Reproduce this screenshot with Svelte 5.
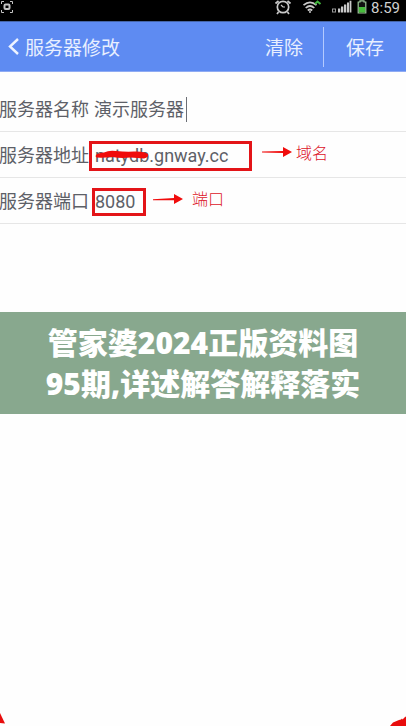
<script>
  let name = $state('演示服务器');
  let address = $state('natydb.gnway.cc');
  let port = $state('8080');
</script>

<div class="screen">
  <div class="status">
    <svg class="shot" width="14" height="14" viewBox="0 0 14 14" fill="none" stroke="#c4c4c4">
      <path d="M1.500 4V1.500H4M10 1.500h2.500V4M12.500 10v2.500H10M4 12.500H1.500V10" stroke-width="1" />
      <rect x="4.500" y="4.500" width="5" height="4.500" rx="1" stroke-width="2" />
    </svg>
    <svg width="18" height="16" viewBox="0 0 18 16" fill="none" stroke="#c9c9c9">
      <circle cx="9" cy="7" r="5.700" stroke-width="1.700" />
      <path d="M1.500 3.500 4.500 .8M13.500 .8l3 2.700M4.500 12 3 14M13.500 12l1.500 2" stroke-width="1.700" />
      <path d="M7 5 9 7h2" stroke-width="1.200" />
    </svg>
    <svg class="wifi" width="20" height="14" viewBox="0 0 20 14" fill="none" stroke="#c9c9c9" stroke-width="1.700">
      <path d="M1.500 5.200Q8 -.5 14.500 5.200M3.700 8Q8 4 12.300 8M5.800 10.500Q8 8.500 10.200 10.500" />
      <circle cx="8" cy="12" r="1" fill="#c9c9c9" stroke="none" />
      <path d="M13 4 15.500 1.500 18.500 4" stroke="#42b83c" stroke-width="2" />
    </svg>
    <svg class="signal" width="20" height="14" viewBox="0 0 20 14" fill="#c9c9c9">
      <rect x=".5" y="9" width="3" height="3" fill="none" stroke="#999" />
      <path d="M6 8.500h2.300v4H6zM9 6.500h2.300v6H9zM12 4.500h2.300v8H12zM15 2.500h2v10h-2zM17.600 .8h1.800v11.700h-1.800z" />
    </svg>
    <svg width="10" height="14" viewBox="0 0 10 14">
      <path d="M3 2V.8h4V2h1.800v11H1.200V2z" fill="#111" stroke="#9fc99b" stroke-width="1.200" />
      <path d="M2 7h6v5.500H2z" fill="#46bd3b" />
    </svg>
    <time>8:59</time>
  </div>

  <header>
    <button class="back" type="button">
      <svg width="12" height="18" viewBox="0 0 12 18" fill="none" stroke="#eef3ff" stroke-width="2.400">
        <path d="M10 1 2 8.500l8 7.500" />
      </svg>
      服务器修改
    </button>
    <div class="actions">
      <button type="button">清除</button>
      <button type="button">保存</button>
    </div>
  </header>

  <form>
    <div class="row first">
      <label for="name">服务器名称</label>
      <input id="name" class="name" bind:value={name} />
      <span class="caret"></span>
    </div>
    <div class="row">
      <label for="address">服务器地址</label>
      <div class="mark wide">
        <input id="address" bind:value={address} />
        <svg class="scribble" width="56" height="12" viewBox="0 0 56 12">
          <path d="M2 6Q4 4 10 3.500 15 1 22 2 32 3 40 2.500 50 2 54 5 55 8 50 9.500 44 9 36 8.500 28 9.500 18 8 8 9 3 8.500 1 8 2 6z" fill="#f00b0b" />
        </svg>
      </div>
      <div class="note">
        <svg width="31" height="12" viewBox="0 0 31 12" fill="#f00c0c">
          <path d="M0 5.500 21 5V1l9 5-9 5V7L0 6.500z" />
        </svg>
        <span>域名</span>
      </div>
    </div>
    <div class="row">
      <label for="port">服务器端口</label>
      <div class="mark narrow"><input id="port" bind:value={port} /></div>
      <div class="note low">
        <svg width="31" height="14" viewBox="0 0 31 14" fill="#f00c0c">
          <path d="M0 8.200 21 7V3l9 5-9 5V9.200L0 9.200z" />
        </svg>
        <span>端口</span>
      </div>
    </div>
  </form>

  <h1>管家婆2024正版资料图<br />95期,详述解答解释落实</h1>

  <footer>
    <svg width="6" height="14" viewBox="0 0 6 14"><path d="M0 1 5 11.500 0 11z" fill="#e80d0d" /></svg>
    <svg width="16" height="14" viewBox="0 0 16 14"><path d="M0 14 3 10.500 9 8l2-.5 1-1 .5 1L15 5l1-.5V14z" fill="#e80d0d" /></svg>
  </footer>
</div>

<style>
  :global(body) {
    margin: 0;
    background: #fefefe;
  }
  .screen {
    display: flex;
    flex-direction: column;
    min-height: 100vh;
    overflow: hidden;
    font-family: Roboto, "Noto Sans CJK SC", sans-serif;
    color: #5d6067;
  }
  button,
  input {
    margin: 0;
    padding: 0;
    border: 0;
    outline: 0;
    background: none;
    color: inherit;
    font: inherit;
  }
  .status {
    display: flex;
    height: 21px;
    padding-right: 6px;
    background: #000;
  }
  .shot {
    margin-right: auto;
  }
  .wifi {
    margin-left: 10px;
  }
  .signal {
    margin: 0 5px 0 10px;
  }
  time {
    margin-left: 4px;
    font-size: 15px;
    line-height: 16px;
    color: #d0d0d0;
  }
  header {
    display: flex;
    justify-content: space-between;
    align-items: center;
    height: 51px;
    box-sizing: border-box;
    border-top: 1px solid #4565a8;
    border-bottom: 1px solid #8fabf3;
    background: #5e8bf2;
    color: #e8efff;
    font-size: 19px;
    line-height: 28px;
  }
  .back {
    display: flex;
    align-items: center;
    gap: 5px;
    padding: 4px 0 0 8px;
  }
  .back svg {
    margin-bottom: 4px;
  }
  .actions {
    display: flex;
  }
  .actions button {
    padding: 8px 20px 4px;
  }
  .actions button + button {
    padding: 8px 22px 4px;
    border-left: 1px solid #b4caff;
  }
  form {
    margin-left: -1px;
  }
  .row {
    display: flex;
    align-items: center;
    height: 43px;
    padding-top: 2px;
    border-bottom: 1px solid #e6e6e6;
    font-size: 18px;
    line-height: 24px;
  }
  .first {
    padding-top: 16px;
  }
  label {
    flex: none;
  }
  .name {
    width: 92px;
    margin-left: 5px;
  }
  .caret {
    width: 1px;
    height: 25px;
    background: #6b6e75;
  }
  .mark {
    position: relative;
    box-sizing: border-box;
    border: 3px solid #e31418;
  }
  .mark input {
    display: block;
    width: 100%;
    box-sizing: border-box;
  }
  .wide {
    width: 163px;
    height: 30px;
    padding-left: 3px;
  }
  .narrow {
    width: 54px;
    height: 28px;
    margin-left: 3px;
  }
  .narrow input {
    line-height: 22px;
  }
  .scribble {
    position: absolute;
    left: 2px;
    top: 5px;
  }
  .note {
    display: flex;
    align-items: center;
    gap: 3px;
    margin-left: 10px;
    padding-bottom: 8px;
    color: #dc1428;
    font-size: 16px;
    font-family: "Noto Sans CJK SC", sans-serif;
    font-weight: 300;
  }
  .low {
    gap: 8px;
    margin-left: 7px;
  }
  h1 {
    margin: 88px 0 0;
    padding: 10px 0;
    background: #88a88e;
    color: #fff;
    font-family: "Noto Sans", "Noto Sans CJK SC", sans-serif;
    font-size: 30px;
    font-weight: 900;
    line-height: 41px;
    text-align: center;
  }
  footer {
    display: flex;
    justify-content: space-between;
    margin-top: auto;
  }
</style>
